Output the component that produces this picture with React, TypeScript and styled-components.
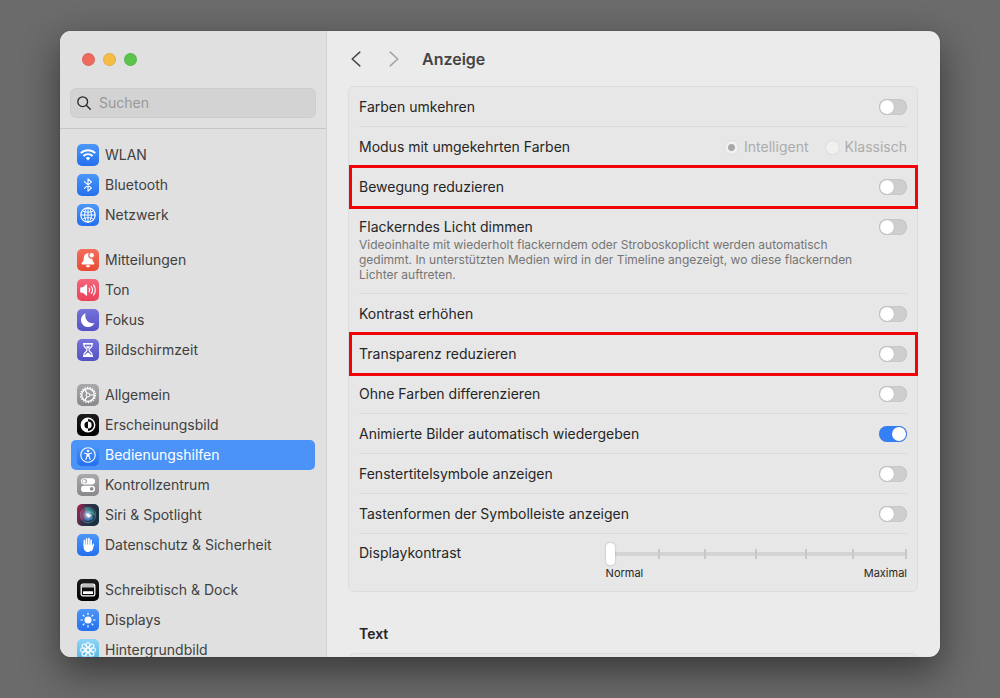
import React, { useId, useState } from 'react';
import styled, { createGlobalStyle, css } from 'styled-components';

const GlobalStyle = createGlobalStyle`
  *, *::before, *::after { box-sizing: border-box; }
  body {
    margin: 0;
    background: #6b6b6b;
    font-family: Inter, "Liberation Sans", sans-serif;
    font-size: 14px;
    line-height: 20px;
    color: #262626;
  }
`;

const Desktop = styled.div`
  height: 100vh;
  padding: 31px 60px 41px;
  display: grid;
  overflow: hidden;
`;

const Window = styled.div`
  display: grid;
  grid-template-columns: 267px minmax(0, 1fr);
  min-height: 0;
  overflow: hidden;
  border-radius: 11px;
  background: #ebebeb;
  box-shadow: 0 0 1px rgba(0, 0, 0, 0.4), 0 14px 38px rgba(0, 0, 0, 0.48);
`;

const Sidebar = styled.aside`
  display: flex;
  flex-direction: column;
  min-height: 0;
  background: #e0e0e0;
  border-right: 1px solid #d2d2d2;
`;

const TrafficLights = styled.div`
  display: flex;
  gap: 8px;
  padding: 22px 22px 0;
`;

const Light = styled.button<{ $color: string }>`
  width: 13px;
  height: 13px;
  padding: 0;
  border: 1px solid rgba(0, 0, 0, 0.08);
  border-radius: 50%;
  background: ${(p) => p.$color};
`;

const SearchField = styled.label`
  display: flex;
  align-items: center;
  gap: 8px;
  height: 30px;
  margin: 22px 10px 10px;
  padding: 0 6px;
  border: 1px solid #cdcdcd;
  border-radius: 6px;
  background: #d3d3d3;
`;

const SearchInput = styled.input`
  flex: 1;
  min-width: 0;
  padding: 0;
  border: 0;
  outline: 0;
  background: transparent;
  font: inherit;
  color: #262626;
  &::placeholder { color: #989898; opacity: 1; }
`;

const SideNav = styled.nav`
  flex: 1;
  min-height: 0;
  overflow: hidden;
  display: flex;
  flex-direction: column;
  gap: 15px;
  padding: 11px 11px 0;
  border-top: 1px solid #c6c6c6;
`;

const NavGroup = styled.ul`
  margin: 0;
  padding: 0;
  list-style: none;
`;

const NavLink = styled.a<{ $active?: boolean }>`
  display: flex;
  align-items: center;
  gap: 6px;
  height: 30px;
  padding: 0 6px;
  border-radius: 5px;
  text-decoration: none;
  color: ${(p) => (p.$active ? '#ffffff' : '#414141')};
  background: ${(p) => (p.$active ? '#4b93f7' : 'transparent')};
`;

const Main = styled.main`
  display: flex;
  flex-direction: column;
  min-width: 0;
  min-height: 0;
  overflow: hidden;
`;

const Header = styled.header`
  display: flex;
  align-items: center;
  flex: none;
  height: 55px;
  padding: 0 21px;
`;

const HistoryButton = styled.button`
  display: flex;
  justify-content: center;
  width: 16px;
  margin-right: 22px;
  padding: 0;
  border: 0;
  background: none;
  color: #4a4a4a;
  &:disabled {
    margin-right: 20px;
    color: #a3a3a3;
  }
`;

const Title = styled.h1`
  margin: 0;
  font-size: 16px;
  font-weight: 600;
  color: #444444;
`;

const Card = styled.section`
  flex: none;
  min-height: 30px;
  margin: 0 22px 0 21px;
  padding: 0 10px;
  border: 1px solid #dddddd;
  border-radius: 6px;
  background: #e7e7e7;
`;

const Row = styled.div<{ $marked?: boolean; $bare?: boolean }>`
  position: relative;
  display: flex;
  justify-content: space-between;
  gap: 16px;
  padding: 10px 0 9px;
  border-bottom: 1px solid ${(p) => (p.$bare ? 'transparent' : '#dadada')};
  ${(p) =>
    p.$marked &&
    css`
      &::after {
        content: '';
        position: absolute;
        inset: -2px -11px -3px -10px;
        border: 3px solid #f00408;
        pointer-events: none;
      }
    `}
`;

const LastRow = styled(Row)`
  border-bottom: 0;
  padding: 9px 0 8px;
`;

const RowText = styled.div`
  min-width: 0;
`;

const RowLabel = styled.label`
  display: block;
`;

const Hint = styled.p`
  max-width: 500px;
  margin: 0;
  padding-bottom: 2px;
  font-size: 12px;
  line-height: 15px;
  color: #757575;
`;

const Switch = styled.input`
  appearance: none;
  flex: none;
  width: 28px;
  height: 16px;
  margin: 2px 0;
  border-radius: 8px;
  background: #cecece;
  box-shadow: inset 0 0 1px rgba(0, 0, 0, 0.25);
  &::before {
    content: '';
    display: block;
    width: 14px;
    height: 14px;
    margin: 1px;
    border-radius: 50%;
    background: #ffffff;
    box-shadow: 0 0 1px rgba(0, 0, 0, 0.25);
  }
  &:checked { background: #3580f6; }
  &:checked::before { margin-left: 13px; }
`;

const RadioGroup = styled.div`
  display: flex;
  gap: 16px;
`;

const RadioLabel = styled.label`
  display: flex;
  align-items: center;
  gap: 5px;
  color: #acacac;
`;

const Radio = styled.input`
  appearance: none;
  width: 15px;
  height: 15px;
  margin: 0;
  border: 1px solid #dcdcdc;
  border-radius: 50%;
  background: #f0f0f0;
  &:checked { background: radial-gradient(circle, #a8a8a8 0 3px, #f0f0f0 4px); }
`;

const SliderBox = styled.div`
  width: 55%;
  display: grid;
`;

const SliderTrack = styled.div`
  display: grid;
  height: 20px;
  align-items: center;
  > * { grid-area: 1 / 1; }
`;

const Ticks = styled.div`
  display: grid;
  grid-template-columns: 54fr 46fr 51fr 50fr 47fr 53fr;
  height: 10px;
  background: linear-gradient(#d4d4d4, #d4d4d4) center / 100% 4px no-repeat;
`;

const Tick = styled.span`
  border-right: 2px solid #c8c8c8;
`;

const Range = styled.input`
  appearance: none;
  position: relative;
  width: 100%;
  height: 22px;
  margin: 0;
  background: transparent;
  &::-webkit-slider-thumb {
    appearance: none;
    width: 9px;
    height: 22px;
    border-radius: 4px;
    background: #ffffff;
    box-shadow: 0 0 2px rgba(0, 0, 0, 0.3);
  }
`;

const SliderCaptions = styled.div`
  display: flex;
  justify-content: space-between;
  font-size: 11px;
  line-height: 20px;
`;

const SectionTitle = styled.h2`
  margin: 32px 32px 9px;
  font-size: 14px;
  line-height: 20px;
  font-weight: 600;
`;

const grads: Record<string, [string, string]> = {
  blue: ['#4b97f8', '#2470ee'],
  red: ['#f2705c', '#e94a33'],
  pink: ['#f5657c', '#ea4158'],
  indigo: ['#7673dc', '#5451c4'],
  gray: ['#a9a9ad', '#88888c'],
  black: ['#1c1c1c', '#000000'],
  cyan: ['#8fd6f5', '#50b4e4'],
};

const glyphs: Record<string, React.ReactNode> = {
  wifi: (
    <g fill="none" stroke="#fff" strokeWidth="1.9">
      <path d="M3.800 9.200a10.200 10.200 0 0 1 14.400 0" />
      <path d="M6.400 12a6.500 6.500 0 0 1 9.200 0" />
      <path d="M11 16.400 8.800 14.100a3.200 3.200 0 0 1 4.400 0z" fill="#fff" stroke="none" />
    </g>
  ),
  bluetooth: (
    <path d="M7.400 7.600l7 6.500-3.400 3.100V4.800l3.400 3.100-7 6.500" fill="none" stroke="#fff" strokeWidth="1.100" strokeLinejoin="round" strokeLinecap="round" />
  ),
  globe: (
    <g fill="none" stroke="#fff" strokeWidth="1">
      <circle cx="11" cy="11" r="7.200" strokeWidth="1.200" />
      <ellipse cx="11" cy="11" rx="3.400" ry="7.200" />
      <path d="M11 3.800v14.400M3.800 11h14.400M5.500 6.800c3.200 2 7.800 2 11 0M5.500 15.200c3.200-2 7.800-2 11 0" />
    </g>
  ),
  bell: (
    <g fill="#fff">
      <path d="M11.900 4.300A4.300 4.300 0 0 0 6.800 8.600c0 3.200-.7 4-1.700 5-.9 1-.5 1.800.5 1.800h10.800c1 0 1.400-.8.500-1.800-.8-.9-1.400-1.800-1.600-3.800A3.500 3.500 0 0 1 11.900 4.300z" />
      <circle cx="14.700" cy="6.300" r="2.200" />
      <path d="M8.900 16.300h4.200a2.100 2.100 0 0 1-4.200 0z" />
    </g>
  ),
  speaker: (
    <g fill="none" stroke="#fff" strokeWidth="1.100" strokeLinecap="round">
      <path d="M3.200 9.200c0-.6.3-.9.900-.9h1.800l3.200-2.900c.5-.4 1-.2 1 .4v10.400c0 .6-.5.800-1 .4l-3.200-2.900H4.100c-.6 0-.9-.3-.9-.9z" fill="#fff" stroke="none" />
      <path d="M12.100 9.100a3.400 3.400 0 0 1 0 3.800" />
      <path d="M14.300 7.500a6 6 0 0 1 0 7" />
      <path d="M16.500 5.900a8.800 8.800 0 0 1 0 10.200" />
    </g>
  ),
  moon: <path d="M8.600 4.300a7.100 7.100 0 1 0 8.900 9.700c-5.700 1.700-10.500-3.800-8.900-9.700z" fill="#fff" />,
  hourglass: (
    <g>
      <path d="M7 4.700v1.700c0 2.300 3 2.900 3 4.600s-3 2.300-3 4.600v1.700h8v-1.700c0-2.300-3-2.900-3-4.600s3-2.300 3-4.600V4.700z" fill="none" stroke="#fff" strokeWidth="1.200" />
      <path d="M6 4h10v1.600H6zM6 16.400h10V18H6zM8.500 7.200h5L11 10zM8 16.500c0-1.500 3-3 3-3s3 1.500 3 3z" fill="#fff" />
    </g>
  ),
  gear: (
    <g fill="none" stroke="#fff">
      <circle cx="11" cy="11" r="7.500" strokeWidth="1.300" strokeDasharray="1.400 1.218" />
      <circle cx="11" cy="11" r="6.300" strokeWidth="1.300" />
      <circle cx="11" cy="11" r="1.900" strokeWidth="1" />
      <path d="M12.900 11h4.300M10 9.400 7.900 5.600M10 12.600l-2.100 3.800" strokeWidth="1.200" />
    </g>
  ),
  appearance: (
    <g>
      <circle cx="11" cy="11" r="6.700" fill="none" stroke="#fff" strokeWidth="1.400" />
      <path d="M11 4a7 7 0 0 0 0 14v-3.400a3.600 3.600 0 0 1 0-7.200z" fill="#fff" />
      <path d="M11 7.400a3.600 3.600 0 0 1 0 7.200z" fill="#fff" />
    </g>
  ),
  accessibility: (
    <g fill="none" stroke="#fff" strokeLinecap="round" strokeLinejoin="round">
      <circle cx="11" cy="11" r="7.200" strokeWidth="1.100" />
      <circle cx="11" cy="7" r="1.300" fill="#fff" stroke="none" />
      <path d="M7.500 9.200l2.500.5v2.500l-1.200 3.300M14.500 9.200l-2.500.5v2.500l1.200 3.300" strokeWidth="1.100" />
      <path d="M10 9.500h2v3.200h-2z" fill="#fff" stroke="none" />
    </g>
  ),
  toggles: (
    <g>
      <rect x="4.500" y="4.700" width="13" height="5.200" rx="2.600" fill="none" stroke="#fff" strokeWidth="1.100" />
      <path d="M8.500 4.700h6.400a2.600 2.600 0 0 1 0 5.200H8.500a3 3 0 0 0 0-5.200z" fill="#fff" />
      <circle cx="7.200" cy="7.300" r="1.500" fill="#fff" />
      <rect x="4" y="11.800" width="14" height="6.200" rx="3.100" fill="#fff" />
      <circle cx="14.700" cy="14.900" r="1.800" fill="#8c8c90" />
    </g>
  ),
  hand: (
    <g fill="none" stroke="#fff" strokeLinecap="round" strokeLinejoin="round">
      <path d="M7.400 11.500V6.700M9.600 10.500V4.900M11.900 10.500V4.700M14.100 11V6.300" strokeWidth="1.700" />
      <path d="M16.400 10.300c-.6 2.300-.8 4.300-2 5.900" strokeWidth="1.500" />
      <path d="M6.600 10.500h8.300l.7 2.500c-.5 3.100-1.700 4.900-4.300 4.900-3.200 0-4.700-2.200-4.700-5z" fill="#fff" stroke="none" />
    </g>
  ),
  dock: (
    <g>
      <rect x="4.200" y="5.200" width="13.600" height="11.600" rx="1.600" fill="none" stroke="#fff" strokeWidth="1.300" />
      <path d="M5 5.800h12v2.700H5z" fill="#bdbdbd" />
      <rect x="6" y="12.300" width="10" height="2.800" rx=".5" fill="#fff" />
    </g>
  ),
  sun: (
    <g stroke="#fff" strokeWidth="1.200" strokeLinecap="round">
      <circle cx="11" cy="11" r="3.500" fill="#fff" stroke="none" />
      <path d="M11 4v1.400M11 16.600V18M4 11h1.400M16.600 11H18M6.100 6.100l1 1M14.900 14.900l1 1M6.100 15.900l1-1M14.900 7.100l1-1" />
    </g>
  ),
  flower: (
    <g fill="none" stroke="#fff" strokeWidth="1">
      {[0, 45, 90, 135, 180, 225, 270, 315].map((a) => (
        <ellipse key={a} cx="11" cy="6.300" rx="2.200" ry="2.900" transform={`rotate(${a} 11 11)`} />
      ))}
      <circle cx="11" cy="11" r="2" />
    </g>
  ),
};

function SiriGlyph() {
  return (
    <g>
      <defs>
        <linearGradient id="siri-bg" x1="0" y1="0.200" x2="1" y2="0.500">
          <stop offset="0" stopColor="#a3244f" />
          <stop offset="0.400" stopColor="#33304c" />
          <stop offset="1" stopColor="#16323f" />
        </linearGradient>
        <radialGradient id="siri-core">
          <stop offset="0" stopColor="#ffffff" />
          <stop offset="0.300" stopColor="#a8dcef" stopOpacity="0.850" />
          <stop offset="1" stopColor="#3a7fae" stopOpacity="0.250" />
        </radialGradient>
      </defs>
      <rect width="22" height="22" rx="5" fill="url(#siri-bg)" />
      <circle cx="11" cy="11" r="7.700" fill="none" stroke="#7eb5c1" strokeOpacity="0.600" strokeWidth="0.800" />
      <path d="M4 7c4-3 9-1 9 3s-5 5-8 6c-2-3-2-6-1-9z" fill="#d9386f" opacity="0.600" />
      <path d="M8 4c5-1 10 3 10 8-3-3-6-4-10-3z" fill="#35b79b" opacity="0.650" />
      <path d="M7 16c4 2 8 1 10-3-4-1-7-1-10 3z" fill="#3b7fe0" opacity="0.650" />
      <circle cx="11" cy="11" r="6" fill="url(#siri-core)" />
      <path d="M8.500 9.500l6.500 1.800-3.500 2.400z" fill="#fff" opacity="0.900" />
    </g>
  );
}

function AppIcon({ glyph, tint }: { glyph: string; tint: string }) {
  const id = useId();
  return (
    <svg width="22" height="22" viewBox="0 0 22 22" aria-hidden="true">
      {glyph === 'siri' ? (
        <SiriGlyph />
      ) : (
        <>
          <defs>
            <linearGradient id={id} x1="0" y1="0" x2="0" y2="1">
              <stop offset="0" stopColor={grads[tint][0]} />
              <stop offset="1" stopColor={grads[tint][1]} />
            </linearGradient>
          </defs>
          <rect width="22" height="22" rx="5" fill={`url(#${id})`} />
          {glyphs[glyph]}
        </>
      )}
    </svg>
  );
}

type NavEntry = { label: string; glyph: string; tint: string; active?: boolean };

const navGroups: NavEntry[][] = [
  [
    { label: 'WLAN', glyph: 'wifi', tint: 'blue' },
    { label: 'Bluetooth', glyph: 'bluetooth', tint: 'blue' },
    { label: 'Netzwerk', glyph: 'globe', tint: 'blue' },
  ],
  [
    { label: 'Mitteilungen', glyph: 'bell', tint: 'red' },
    { label: 'Ton', glyph: 'speaker', tint: 'pink' },
    { label: 'Fokus', glyph: 'moon', tint: 'indigo' },
    { label: 'Bildschirmzeit', glyph: 'hourglass', tint: 'indigo' },
  ],
  [
    { label: 'Allgemein', glyph: 'gear', tint: 'gray' },
    { label: 'Erscheinungsbild', glyph: 'appearance', tint: 'black' },
    { label: 'Bedienungshilfen', glyph: 'accessibility', tint: 'blue', active: true },
    { label: 'Kontrollzentrum', glyph: 'toggles', tint: 'gray' },
    { label: 'Siri & Spotlight', glyph: 'siri', tint: 'black' },
    { label: 'Datenschutz & Sicherheit', glyph: 'hand', tint: 'blue' },
  ],
  [
    { label: 'Schreibtisch & Dock', glyph: 'dock', tint: 'black' },
    { label: 'Displays', glyph: 'sun', tint: 'blue' },
    { label: 'Hintergrundbild', glyph: 'flower', tint: 'cyan' },
  ],
];

type ToggleRowProps = { label: string; hint?: string; on?: boolean; marked?: boolean; bare?: boolean };

function ToggleRow({ label, hint, on = false, marked, bare }: ToggleRowProps) {
  const id = useId();
  const [checked, setChecked] = useState(on);
  return (
    <Row $marked={marked} $bare={bare}>
      <RowText>
        <RowLabel htmlFor={id}>{label}</RowLabel>
        {hint && <Hint>{hint}</Hint>}
      </RowText>
      <Switch id={id} type="checkbox" role="switch" checked={checked} onChange={(e) => setChecked(e.target.checked)} />
    </Row>
  );
}

export default function App() {
  return (
    <>
      <GlobalStyle />
      <Desktop>
        <Window>
          <Sidebar>
            <TrafficLights>
              <Light $color="#ee6a5f" aria-label="Schließen" />
              <Light $color="#f5bd45" aria-label="Minimieren" />
              <Light $color="#5cc44d" aria-label="Zoomen" />
            </TrafficLights>
            <SearchField>
              <svg width="14" height="14" viewBox="0 0 14 14" fill="none" stroke="#262626" strokeWidth="1.300" strokeLinecap="round" aria-hidden="true">
                <circle cx="5.700" cy="5.700" r="4.900" />
                <path d="M9.300 9.300l4 4" />
              </svg>
              <SearchInput type="search" placeholder="Suchen" aria-label="Suchen" />
            </SearchField>
            <SideNav>
              {navGroups.map((group, i) => (
                <NavGroup key={i}>
                  {group.map((n) => (
                    <li key={n.label}>
                      <NavLink href="#" $active={n.active}>
                        <AppIcon glyph={n.glyph} tint={n.tint} />
                        {n.label}
                      </NavLink>
                    </li>
                  ))}
                </NavGroup>
              ))}
            </SideNav>
          </Sidebar>
          <Main>
            <Header>
              <HistoryButton aria-label="Zurück">
                <svg width="10" height="16" viewBox="0 0 10 16" fill="none" stroke="currentColor" strokeWidth="1.600" strokeLinecap="round" strokeLinejoin="round">
                  <path d="M8.800 1.200 1.200 8l7.600 6.800" />
                </svg>
              </HistoryButton>
              <HistoryButton aria-label="Vorwärts" disabled>
                <svg width="10" height="16" viewBox="0 0 10 16" fill="none" stroke="currentColor" strokeWidth="1.600" strokeLinecap="round" strokeLinejoin="round">
                  <path d="M1.200 1.200 8.800 8l-7.600 6.800" />
                </svg>
              </HistoryButton>
              <Title>Anzeige</Title>
            </Header>
            <Card>
              <ToggleRow label="Farben umkehren" />
              <Row $bare>
                <span id="invert-mode">Modus mit umgekehrten Farben</span>
                <RadioGroup role="radiogroup" aria-labelledby="invert-mode">
                  <RadioLabel>
                    <Radio type="radio" name="invert" defaultChecked disabled />
                    Intelligent
                  </RadioLabel>
                  <RadioLabel>
                    <Radio type="radio" name="invert" disabled />
                    Klassisch
                  </RadioLabel>
                </RadioGroup>
              </Row>
              <ToggleRow label="Bewegung reduzieren" marked bare />
              <ToggleRow
                label="Flackerndes Licht dimmen"
                hint="Videoinhalte mit wiederholt flackerndem oder Stroboskoplicht werden automatisch gedimmt. In unterstützten Medien wird in der Timeline angezeigt, wo diese flackernden Lichter auftreten."
              />
              <ToggleRow label="Kontrast erhöhen" bare />
              <ToggleRow label="Transparenz reduzieren" marked bare />
              <ToggleRow label="Ohne Farben differenzieren" />
              <ToggleRow label="Animierte Bilder automatisch wiedergeben" on />
              <ToggleRow label="Fenstertitelsymbole anzeigen" />
              <ToggleRow label="Tastenformen der Symbolleiste anzeigen" />
              <LastRow>
                <RowLabel htmlFor="contrast">Displaykontrast</RowLabel>
                <SliderBox>
                  <SliderTrack>
                    <Ticks aria-hidden="true">
                      <Tick /><Tick /><Tick /><Tick /><Tick /><Tick />
                    </Ticks>
                    <Range id="contrast" type="range" min="0" max="6" defaultValue="0" />
                  </SliderTrack>
                  <SliderCaptions>
                    <span>Normal</span>
                    <span>Maximal</span>
                  </SliderCaptions>
                </SliderBox>
              </LastRow>
            </Card>
            <SectionTitle>Text</SectionTitle>
            <Card aria-label="Text" />
          </Main>
        </Window>
      </Desktop>
    </>
  );
}
